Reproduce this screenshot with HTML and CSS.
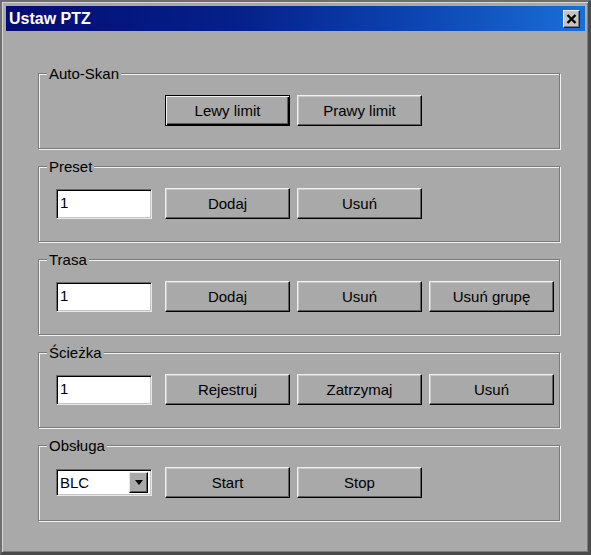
FILE: index.html
```html
<!DOCTYPE html>
<html lang="pl">
<head>
<meta charset="utf-8">
<title>Ustaw PTZ</title>
<link rel="stylesheet" href="styles.css">
</head>
<body>
<div class="window">
  <div class="titlebar">
    <span class="title">Ustaw PTZ</span>
    <div class="close">
      <svg width="11" height="10" viewBox="0 0 11 10"><path d="M1.5 1 L9.5 9 M9.5 1 L1.5 9" stroke="#000" stroke-width="2.4" fill="none"/></svg>
    </div>
  </div>
  <div class="groups">
    <fieldset class="group">
      <legend>Auto-Skan</legend>
      <div class="row">
        <span></span>
        <div class="btn default">Lewy limit</div>
        <div class="btn">Prawy limit</div>
      </div>
    </fieldset>
    <fieldset class="group">
      <legend>Preset</legend>
      <div class="row">
        <div class="edit">1</div>
        <div class="btn">Dodaj</div>
        <div class="btn">Usuń</div>
      </div>
    </fieldset>
    <fieldset class="group">
      <legend>Trasa</legend>
      <div class="row">
        <div class="edit">1</div>
        <div class="btn">Dodaj</div>
        <div class="btn">Usuń</div>
        <div class="btn">Usuń grupę</div>
      </div>
    </fieldset>
    <fieldset class="group">
      <legend>Ścieżka</legend>
      <div class="row">
        <div class="edit">1</div>
        <div class="btn">Rejestruj</div>
        <div class="btn">Zatrzymaj</div>
        <div class="btn">Usuń</div>
      </div>
    </fieldset>
    <fieldset class="group">
      <legend>Obsługa</legend>
      <div class="row">
        <div class="combo"><span class="combo-text">BLC</span><span class="combo-btn"><span class="arrow"></span></span></div>
        <div class="btn">Start</div>
        <div class="btn">Stop</div>
      </div>
    </fieldset>
  </div>
</div>
</body>
</html>
```
FILE: styles.css
```css
html, body {
  margin: 0;
  padding: 0;
  background: #a9a9a9;
}
.window {
  width: 591px;
  height: 555px;
  box-sizing: border-box;
  background: #a9a9a9;
  border-style: solid;
  border-width: 2px 3px 3px 2px;
  border-color: #6e6e6e #4a4a4a #4a4a4a #6e6e6e;
  box-shadow: inset 1px 1px #d6d6d6, inset -1px -1px #7c7c7c;
  padding: 4px 3px 0 4px;
  font-family: "Liberation Sans", Arial, sans-serif;
  color: #000;
}
.titlebar {
  height: 25px;
  display: flex;
  align-items: center;
  justify-content: space-between;
  padding: 0 5px 0 3px;
  background: linear-gradient(90deg, #020c74 0%, #05208a 40%, #0c44b0 70%, #1a6ed6 100%);
}
.title {
  color: #fff;
  font-weight: bold;
  font-size: 16px;
  line-height: 18px;
}
.close {
  width: 17px;
  height: 18px;
  box-sizing: border-box;
  background: #c4c4c4;
  border: 1px solid;
  border-color: #f0f0f0 #202020 #202020 #f0f0f0;
  box-shadow: inset -1px -1px #7a7a7a;
  display: flex;
  align-items: center;
  justify-content: center;
}
.groups {
  display: flex;
  flex-direction: column;
  gap: 9px;
  margin: 34px 0 0 32px;
  width: 522px;
}
.group {
  box-sizing: border-box;
  height: 84px;
  margin: 0;
  padding: 13px 0 0 17px;
  border: 1px solid #7a7a7a;
  box-shadow: inset 1px 1px #f2f2f2, 1px 1px #f2f2f2;
  min-inline-size: 0;
}
.group legend {
  font-size: 15px;
  line-height: 17px;
  padding: 0 2px;
  margin-left: -9px;
  background: #a9a9a9;
}
.row {
  display: grid;
  grid-template-columns: 102px 125px 125px 125px;
  column-gap: 7px;
  align-items: center;
}
.btn {
  box-sizing: border-box;
  height: 31px;
  font-size: 15px;
  display: flex;
  align-items: center;
  justify-content: center;
  background: #a9a9a9;
  border: 1px solid;
  border-color: #f0f0f0 #000 #000 #f0f0f0;
  box-shadow: inset -1px -1px #5e5e5e, inset 1px 1px #c8c8c8;
}
.btn.default {
  border-color: #000;
  box-shadow: inset 1px 1px #f0f0f0, inset -1px -1px #000, inset -2px -2px #5e5e5e;
}
.edit {
  box-sizing: border-box;
  width: 96px;
  height: 30px;
  background: #fff;
  font-size: 15px;
  line-height: 26px;
  padding-left: 3px;
  border: 1px solid;
  border-color: #6a6a6a #e8e8e8 #e8e8e8 #6a6a6a;
  box-shadow: inset 1px 1px #000, inset -1px -1px #c4c4c4;
}
.combo {
  box-sizing: border-box;
  width: 96px;
  height: 27px;
  background: #fff;
  display: flex;
  align-items: center;
  justify-content: space-between;
  padding: 2px 3px 2px 2px;
  border: 1px solid;
  border-color: #6a6a6a #e8e8e8 #e8e8e8 #6a6a6a;
  box-shadow: inset 1px 1px #000, inset -1px -1px #c4c4c4;
}
.combo-text {
  font-size: 15px;
  padding-left: 1px;
}
.combo-btn {
  box-sizing: border-box;
  width: 19px;
  height: 21px;
  background: #a9a9a9;
  border: 1px solid;
  border-color: #e8e8e8 #000 #000 #e8e8e8;
  box-shadow: inset -1px -1px #5e5e5e;
  display: flex;
  align-items: center;
  justify-content: center;
}
.arrow {
  width: 0;
  height: 0;
  border-left: 4px solid transparent;
  border-right: 4px solid transparent;
  border-top: 5px solid #000;
}
```
